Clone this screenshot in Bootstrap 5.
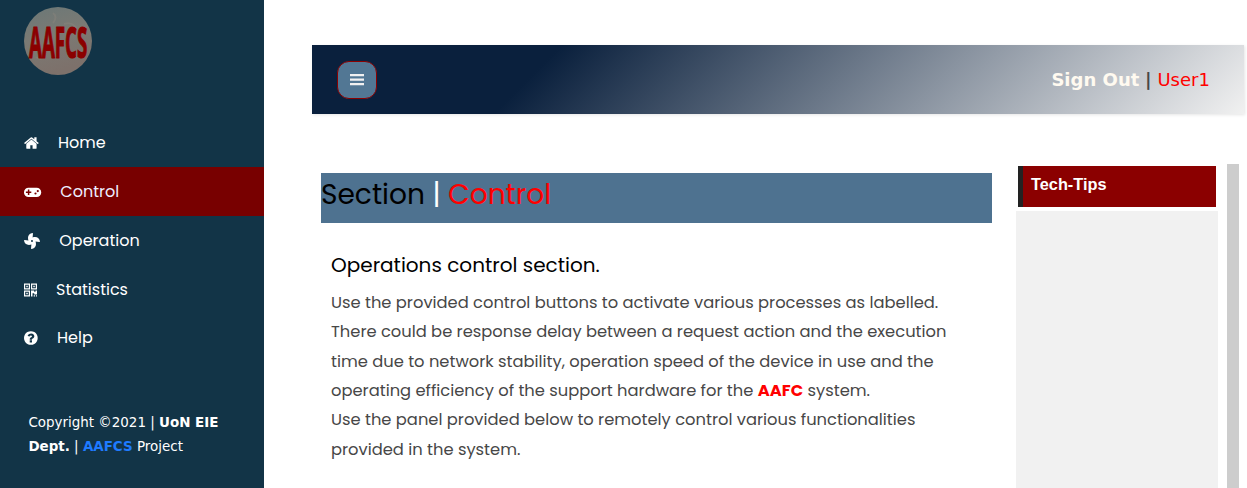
<!DOCTYPE html>
<html lang="en">
<head>
<meta charset="utf-8">
<title>AAFCS | Control</title>
<link href="https://cdn.jsdelivr.net/npm/bootstrap@5.3.0/dist/css/bootstrap.min.css" rel="stylesheet">
<style>
body{height:488px;overflow:hidden;background:#fff;font-family:Poppins,Inter,sans-serif;font-size:16px;color:#474747}
.side{width:264px;background:#123447;color:#fff;flex:none}
.logo{width:68px;height:68px;margin:7px 0 0 24px;display:block}
.side .nav{margin-top:43px}
.side .nav-link{height:48.8px;padding:1.6px 0 0 24px;color:#fff;border-radius:0;white-space:nowrap}
.side .nav-link.active{background:#780000;color:#eef}
.side svg{flex:none}
.foot{font:13.44px/24px "DejaVu Sans",sans-serif;padding:0 20px 0 28.4px;margin-top:49px}
.foot a{color:#1f7bff;text-decoration:none;font-weight:700}
.main{padding:45px 3px 0 48px}
.topbar{height:69px;padding:0 34px 0 25px;background:linear-gradient(135deg,#0a203d 25%,#f1f1f1 100%);box-shadow:1px 1px 3px rgba(0,0,0,.1);font:18.05px "DejaVu Sans",sans-serif}
.signout{color:#fffaf0}
.toggle{width:40px;height:38px;border:1px solid #8b0000;border-radius:12px;background:#527794;padding:0}
.sect{width:671px;height:50px;margin:9px 0 0 9px;background:#4e7290;font-size:28.05px;line-height:43px;color:#000;white-space:nowrap}
.copy{margin:26px 0 0 19px;white-space:nowrap}
.copy h2{font-size:20px;line-height:32px;color:#000;font-weight:400;margin:0 0 6.8px}
.copy p{font-size:16.32px;line-height:29.376px;margin:0}
.tips{width:202px;margin:2px 0 0 24px;flex:none}
.tiphead{height:41px;margin:0 2px 4px;border-left:5px solid #222;background:#8b0000;color:#fff;font:bold 16.32px/37px "Liberation Sans",sans-serif;padding-left:8px}
.tipbody{height:280px;background:#f1f1f1}
.rail{width:12px;height:330px;margin-left:9px;background:#cdcdcd;flex:none}
.red{color:red}
</style>
</head>
<body>
<div class="d-flex h-100">
<aside class="side">
<svg class="logo" viewBox="0 0 68 68"><defs><linearGradient id="g" x2=".3" y2="1"><stop stop-color="#6b7877"/><stop offset=".5" stop-color="#7b7a74"/><stop offset="1" stop-color="#7d716b"/></linearGradient></defs><circle cx="34" cy="34" r="34" fill="url(#g)"/><path d="M29 6q5 4 0 10M40 17q8-3 13 5M12 50q5 4 9-1" fill="none" stroke="#88837b" stroke-width="2" opacity=".5"/><text transform="translate(5 51) scale(.54 1)" font-family="Open Sans, sans-serif" font-weight="700" font-size="43" textLength="108" lengthAdjust="spacingAndGlyphs" fill="#8b0000" stroke="#8b0000" stroke-width="1.2">AAFCS</text></svg>
<nav class="nav flex-column flex-nowrap">
<a class="nav-link d-flex align-items-center" href="#"><svg width="34" height="16" viewBox="0 0 3808 1792" fill="#fff"><path d="M1408 992v480q0 26-19 45t-45 19h-384v-384h-256v384h-384q-26 0-45-19t-19-45v-480q0-1 .5-3t.5-3l575-474 575 474q1 2 1 6zm223-69l-62 74q-8 9-21 11h-3q-13 0-21-7l-692-577-692 577q-12 8-24 7-13-2-21-11l-62-74q-8-10-7-23.5t11-21.5l719-599q32-26 76-26t76 26l244 204v-195q0-14 9-23t23-9h192q14 0 23 9t9 23v408l219 182q10 8 11 21.5t-7 23.5z"/></svg><span>Home</span></a>
<a class="nav-link active d-flex align-items-center" href="#"><svg width="36.300" height="16" viewBox="0 0 36.300 16"><rect y="3.700" width="17.200" height="9.300" rx="4.600" fill="#fff"/><path d="M4.600 5.600v5.400M1.900 8.300h5.400" stroke="#780000" stroke-width="1.500"/><circle cx="11.500" cy="9.500" r="1.100" fill="#780000"/><circle cx="13.800" cy="7.100" r="1.100" fill="#780000"/></svg><span>Control</span></a>
<a class="nav-link d-flex align-items-center" href="#"><svg width="35.300" height="16" viewBox="0 0 1130 512" fill="#fff"><path d="M352.600 128c-28.100 0-54.100 5.200-77.500 12.900l12.500-123.100C288.700 7.500 280.400-.9 270.100 0 191.600 8.200 128 74.200 128 154.700c0 31.400 5.800 60.200 14.400 86.400L17.900 224.600C7.700 223.500-.9 231.900 0 242.200 8.300 320.600 74.200 384 159.400 384c28.100 0 54.100-5.200 77.500-12.900l-12.500 123.100c-1.100 10.200 7.300 18.700 17.600 17.800 78.400-8.300 142-74.300 142-154.700 0-31.500-5.800-60.300-14.400-86.500l124.500 16.600c10.200 1.100 18.800-7.300 17.900-17.600C503.700 191.400 437.800 128 352.600 128zM256 288a32 32 0 1 1 0-64 32 32 0 0 1 0 64z"/></svg><span>Operation</span></a>
<a class="nav-link d-flex align-items-center" href="#"><svg width="32" height="14" viewBox="0 0 32 14"><path d="M.6 1.100h4.800v4.800H.6zM7.600 1.100h4.800v4.800H7.600zM.6 8.100h4.800v4.800H.6z" fill="none" stroke="#fff" stroke-width="1.200"/><path fill="#fff" d="M2.300 2.800h1.500v1.500H2.300zM9.300 2.800h1.500v1.500H9.300zM2.300 9.800h1.500v1.500H2.300zM7 7.500h3.200v1.300h1.300V7.500H13v4h-2.800v-1.200H8.500v3.200H7zM9.700 12.200H11v1.300H9.700zM11.900 12.200H13v1.300h-1.100z"/></svg><span>Statistics</span></a>
<a class="nav-link d-flex align-items-center" href="#"><svg width="33" height="16" viewBox="128 0 3696 1792" fill="#fff"><path d="M1024 1376v-192q0-14-9-23t-23-9h-192q-14 0-23 9t-9 23v192q0 14 9 23t23 9h192q14 0 23-9t9-23zm256-672q0-88-55.500-163t-138.500-116-170-41q-243 0-371 213-15 24 8 42l132 100q7 6 19 6 16 0 25-12 53-68 86-92 34-24 86-24 48 0 85.500 26t37.500 59q0 38-20 61t-68 45q-63 28-115.500 86.500t-52.500 125.500v36q0 14 9 23t23 9h192q14 0 23-9t9-23q0-19 21.500-49.500t54.500-49.500q32-18 49-28.500t46-35 44.500-48 28-60.500 12.500-81zm384 192q0 209-103 385.500t-279.500 279.500-385.500 103-385.500-103-279.500-279.500-103-385.500 103-385.500 279.500-279.500 385.500-103 385.500 103 279.500 279.500 103 385.500z"/></svg><span>Help</span></a>
</nav>
<div class="foot">Copyright ©2021 | <b>UoN EIE Dept.</b> | <a href="#">AAFCS</a> Project</div>
</aside>
<main class="main flex-grow-1">
<header class="topbar d-flex align-items-center justify-content-between">
<button class="toggle d-flex align-items-center justify-content-center"><svg width="14" height="12" viewBox="0 0 14 12"><path d="M0 1.200h14M0 5.700h14M0 10.200h14" stroke="#f1f1f1" stroke-width="2.200"/></svg></button>
<div><b class="signout">Sign Out</b> <b>|</b> <span class="red">User1</span></div>
</header>
<div class="d-flex" style="margin-top:50px">
<section>
<div class="sect"><span>Section</span> <span class="text-white">|</span> <span class="red">Control</span></div>
<div class="copy">
<h2>Operations control section.</h2>
<p>Use the provided control buttons to activate various processes as labelled.<br>
There could be response delay between a request action and the execution<br>
time due to network stability, operation speed of the device in use and the<br>
operating efficiency of the support hardware for the <b class="red">AAFC</b> system.<br>
Use the panel provided below to remotely control various functionalities<br>
provided in the system.</p>
</div>
</section>
<aside class="tips"><div class="tiphead">Tech-Tips</div><div class="tipbody"></div></aside>
<div class="rail"></div>
</div>
</main>
</div>
<script src="https://cdn.jsdelivr.net/npm/bootstrap@5.3.0/dist/js/bootstrap.bundle.min.js"></script>
</body>
</html>
